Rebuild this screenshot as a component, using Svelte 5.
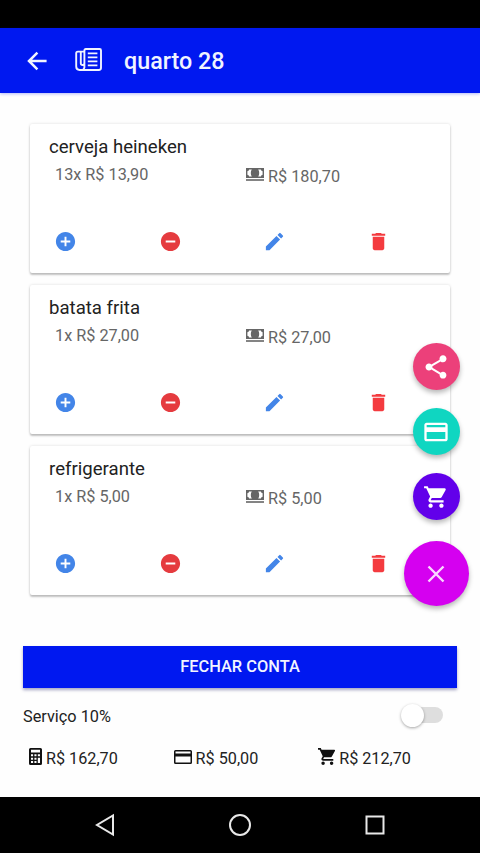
<script lang="ts">
	interface Item {
		name: string;
		qty: number;
		price: number;
	}

	let items = $state<Item[]>([
		{ name: 'cerveja heineken', qty: 13, price: 13.9 },
		{ name: 'batata frita', qty: 1, price: 27 },
		{ name: 'refrigerante', qty: 1, price: 5 }
	]);
	let service = $state(false);
	let fabOpen = $state(true);
	const paid = 50;

	const total = $derived(items.reduce((sum, i) => sum + i.qty * i.price, 0));
	const grandTotal = $derived(service ? total * 1.1 : total);

	function money(n: number) {
		return 'R$ ' + n.toFixed(2).replace('.', ',');
	}

	function removeItem(item: Item) {
		items = items.filter((i) => i !== item);
	}

	const icons = {
		add: 'M12 2C6.48 2 2 6.48 2 12s4.48 10 10 10 10-4.48 10-10S17.52 2 12 2zm5 11h-4v4h-2v-4H7v-2h4V7h2v4h4v2z',
		remove: 'M12 2C6.48 2 2 6.48 2 12s4.48 10 10 10 10-4.48 10-10S17.52 2 12 2zm5 11H7v-2h10v2z',
		edit: 'M3 17.25V21h3.75L17.81 9.94l-3.75-3.75L3 17.25zM20.71 7.04a1 1 0 0 0 0-1.41l-2.34-2.34a1 1 0 0 0-1.41 0l-1.83 1.83 3.75 3.75 1.83-1.83z',
		trash: 'M6 19c0 1.1.9 2 2 2h8c1.1 0 2-.9 2-2V7H6v12zM19 4h-3.5l-1-1h-5l-1 1H5v2h14V4z',
		share: 'M18 16.08c-.76 0-1.44.3-1.96.77L8.91 12.7c.05-.23.09-.46.09-.7s-.04-.47-.09-.7l7.05-4.11c.54.5 1.25.81 2.04.81 1.66 0 3-1.34 3-3s-1.34-3-3-3-3 1.34-3 3c0 .24.04.47.09.7L8.04 9.81C7.5 9.31 6.79 9 6 9c-1.66 0-3 1.34-3 3s1.34 3 3 3c.79 0 1.5-.31 2.04-.81l7.12 4.16c-.05.21-.08.43-.08.65 0 1.61 1.31 2.92 2.92 2.92s2.92-1.31 2.92-2.92-1.31-2.92-2.92-2.92z',
		card: 'M20 4H4c-1.11 0-1.99.89-1.99 2L2 18c0 1.11.89 2 2 2h16c1.11 0 2-.89 2-2V6c0-1.11-.89-2-2-2zm0 14H4v-6h16v6zm0-10H4V6h16v2z',
		cart: 'M7 18c-1.1 0-1.99.9-1.99 2S5.9 22 7 22s2-.9 2-2-.9-2-2-2zM1 2v2h2l3.6 7.59-1.35 2.45c-.16.28-.25.61-.25.96 0 1.1.9 2 2 2h12v-2H7.42c-.14 0-.25-.11-.25-.25l.03-.12.9-1.63h7.45c.75 0 1.41-.41 1.75-1.03l3.58-6.49A1 1 0 0 0 20 4H5.21l-.94-2H1zm16 16c-1.1 0-1.99.9-1.99 2s.89 2 1.99 2 2-.9 2-2-.9-2-2-2z'
	};
</script>

{#snippet icon(path: string, size: number)}
	<svg width={size} height={size} viewBox="0 0 24 24" fill="currentColor"><path d={path} /></svg>
{/snippet}

<div class="app">
	<div class="status-bar"></div>
	<header class="toolbar">
		<button class="back" aria-label="Voltar">
			<svg width="20" height="20" viewBox="0 0 20 20" fill="none" stroke="currentColor" stroke-width="2.5">
				<path d="M19.6 10H2.6M10.4 1.6L2 10l8.4 8.4" />
			</svg>
		</button>
		<svg class="paper" width="28" height="24" viewBox="0 0 28 24" fill="none" stroke="currentColor" stroke-width="1.9">
			<path d="M9.4 3.4V2.4Q9.4 1 10.8 1H24.6Q26 1 26 2.4V19.8Q26 22 23.8 22H4.6Q1.2 22 1.2 18.6V5.2Q1.2 3.6 2.8 3.6H9.4V15.6Q9.4 17 7.6 17Q5.8 17 5.8 15.2V3.8M9.4 15.6v3.8Q9.2 21 7.8 22" />
			<path d="M12.8 5.4h9.6M12.8 9.4h9.6M12.8 13.4h9.6M12.8 17.4h9.6" />
		</svg>
		<h1 class="title">quarto 28</h1>
	</header>

	<main class="list">
		{#each items as item}
			<section class="card">
				<h2 class="name">{item.name}</h2>
				<div class="values">
					<span class="unit">{item.qty}x {money(item.price)}</span>
					<span class="subtotal">
						<svg width="18" height="13" viewBox="0 0 18 13" fill="currentColor">
							<path fill-rule="evenodd" d="M0 0H18V10H0ZM1.4 3.2V6.8Q2.8 7 3.2 8.6H5.8Q4.8 7.2 4.8 5T5.8 1.4H3.2Q2.8 3 1.4 3.2ZM16.6 3.2Q15.2 3 14.8 1.4H12.2Q13.2 2.8 13.2 5T12.2 8.6H14.8Q15.2 7 16.6 6.8Z" />
							<path d="M0 11.2h18v1.6H0z" />
						</svg>
						{money(item.qty * item.price)}
					</span>
				</div>
				<div class="actions">
					<button class="blue" aria-label="Adicionar" onclick={() => item.qty++}>{@render icon(icons.add, 23)}</button>
					<button class="red" aria-label="Remover" onclick={() => (item.qty = Math.max(1, item.qty - 1))}>{@render icon(icons.remove, 23)}</button>
					<button class="blue" aria-label="Editar">{@render icon(icons.edit, 23)}</button>
					<button class="trash" aria-label="Excluir" onclick={() => removeItem(item)}>{@render icon(icons.trash, 23)}</button>
				</div>
			</section>
		{/each}
	</main>

	<footer class="summary">
		<button class="close-bill">FECHAR CONTA</button>
		<div class="service">
			<span>Serviço 10%</span>
			<button class="toggle" class:on={service} role="switch" aria-checked={service} aria-label="Serviço 10%" onclick={() => (service = !service)}>
				<span class="knob"></span>
			</button>
		</div>
		<div class="totals">
			<span class="total">
				<svg width="13" height="17" viewBox="0 0 13 17" fill="currentColor">
					<path fill-rule="evenodd" d="M1.5 0h10Q13 0 13 1.5v14Q13 17 11.5 17h-10Q0 17 0 15.5v-14Q0 0 1.5 0zM2 1.8v2.7h9V1.8zM2 6.2v2h2.1v-2zm3.4 0v2h2.1v-2zm3.4 0v2H11v-2zM2 9.7v2h2.1v-2zm3.4 0v2h2.1v-2zm3.4 0v5.4H11V9.7zM2 13.1v2h2.1v-2zm3.4 0v2h2.1v-2z" />
				</svg>
				{money(grandTotal - paid)}
			</span>
			<span class="total">
				<svg width="18" height="14" viewBox="0 0 18 14" fill="currentColor">
					<path fill-rule="evenodd" d="M1.5 0h15Q18 0 18 1.5v11Q18 14 16.5 14h-15Q0 14 0 12.5v-11Q0 0 1.5 0zm0 1.4v2h15v-2zm0 5v6.1h15v-6.1z" />
				</svg>
				{money(paid)}
			</span>
			<span class="total">
				<svg width="17" height="17" viewBox="1 2 20 20" fill="currentColor"><path d={icons.cart} /></svg>
				{money(grandTotal)}
			</span>
		</div>
	</footer>

	<nav class="system-nav">
		<svg width="20" height="24" viewBox="0 0 20 24"><path d="M18 2.5v19L2 12z" /></svg>
		<svg width="24" height="24" viewBox="0 0 24 24"><circle cx="12" cy="12" r="10" /></svg>
		<svg width="20" height="20" viewBox="0 0 20 20"><path d="M1.5 1.5h17v17h-17z" /></svg>
	</nav>

	<div class="fabs">
		{#if fabOpen}
			<button class="fab pink" aria-label="Compartilhar">{@render icon(icons.share, 28)}</button>
			<button class="fab teal" aria-label="Pagamento">{@render icon(icons.card, 28)}</button>
			<button class="fab purple" aria-label="Carrinho">{@render icon(icons.cart, 26)}</button>
		{/if}
		<button class="fab main" aria-label="Fechar menu" onclick={() => (fabOpen = !fabOpen)}>
			<svg width="18" height="18" viewBox="0 0 18 18" fill="none" stroke="currentColor" stroke-width="2.4">
				<path d="M1.5 1.5l15 15M16.5 1.5l-15 15" />
			</svg>
		</button>
	</div>
</div>

<style>
	:global(body) {
		margin: 0;
	}
	.app {
		position: relative;
		display: flex;
		flex-direction: column;
		height: 853px;
		background: #fefefe;
		color: #222;
		font-family: Roboto, sans-serif;
		overflow: hidden;
	}
	button {
		display: flex;
		align-items: center;
		justify-content: center;
		padding: 0;
		border: none;
		background: none;
		color: inherit;
		font-family: inherit;
		cursor: pointer;
	}
	svg {
		display: block;
		flex: none;
	}
	.status-bar {
		height: 28px;
		background: #000;
	}
	.toolbar {
		display: flex;
		align-items: center;
		height: 65px;
		padding-left: 27px;
		box-sizing: border-box;
		background: #0018f0;
		color: #f0f4ff;
		box-shadow: 0 1px 3px rgba(0, 24, 240, 0.3);
	}
	.back {
		margin-right: 28px;
	}
	.paper {
		margin: 0 21px 2px 0;
	}
	.title {
		margin: 0;
		font-size: 23.3px;
		font-weight: 500;
		line-height: 28px;
	}
	.list {
		display: flex;
		flex-direction: column;
		gap: 12px;
		height: 522px;
		padding: 31px 30px 0;
	}
	.card {
		height: 149px;
		box-sizing: border-box;
		padding: 11px 0 0 19px;
		border-radius: 2px;
		background: #fff;
		box-shadow:
			0 2px 2px rgba(0, 0, 0, 0.22),
			0 0 3px rgba(0, 0, 0, 0.14);
	}
	.name {
		margin: 0;
		font-size: 18.6px;
		font-weight: 400;
		line-height: 24px;
		color: #222;
	}
	.values {
		display: grid;
		grid-template-columns: 191px 1fr;
		padding-left: 6px;
		font-size: 16.25px;
		line-height: 20px;
		color: #666;
	}
	.unit {
		padding-top: 6px;
	}
	.subtotal {
		display: flex;
		gap: 4px;
		padding-top: 8px;
	}
	.subtotal svg {
		margin-top: 1px;
	}
	.actions {
		display: grid;
		grid-template-columns: 105px 104px 104px 104px;
		justify-items: start;
		padding: 43px 0 0 5px;
	}
	.blue {
		color: #4385e8;
	}
	.red {
		color: #e53b3f;
	}
	.trash {
		color: #f43b3f;
	}
	.summary {
		flex: 1;
		padding: 0 23px;
	}
	.close-bill {
		width: 434px;
		height: 42px;
		padding-bottom: 2px;
		background: #0018f0;
		color: #f2f4ff;
		font-size: 16.4px;
		font-weight: 500;
		box-shadow: 0 2px 3px rgba(0, 0, 90, 0.35);
	}
	.service {
		display: flex;
		align-items: center;
		justify-content: space-between;
		height: 54px;
		padding-right: 14px;
		font-size: 16.3px;
	}
	.service > span {
		padding-top: 3px;
	}
	.toggle {
		justify-content: flex-start;
		width: 36px;
		height: 16px;
		border-radius: 8px;
		background: #dedede;
	}
	.knob {
		flex: none;
		width: 23px;
		height: 23px;
		margin-left: -6px;
		border-radius: 50%;
		background: #fff;
		box-shadow: 0 1px 3px rgba(0, 0, 0, 0.35);
	}
	.toggle.on .knob {
		margin-left: 19px;
	}
	.totals {
		display: grid;
		grid-template-columns: repeat(3, 144.6px);
		padding: 1px 0 0 6px;
		font-size: 16.2px;
		line-height: 32px;
	}
	.total {
		display: flex;
		gap: 4px;
	}
	.total svg {
		margin-top: 5px;
		color: #111;
	}
	.total:nth-child(2) svg {
		margin-top: 7px;
	}
	.system-nav {
		display: grid;
		grid-template-columns: repeat(3, 135px);
		justify-content: center;
		place-items: center;
		height: 56px;
		background: #000;
	}
	.system-nav svg {
		fill: none;
		stroke: #e8e8e8;
		stroke-width: 2;
	}
	.fabs {
		position: absolute;
		right: 11px;
		top: 343px;
		display: flex;
		flex-direction: column;
		align-items: center;
		gap: 18px;
	}
	.fab {
		width: 47px;
		height: 47px;
		box-sizing: border-box;
		padding-right: 1px;
		border-radius: 50%;
		color: #fff;
		box-shadow: 0 3px 5px rgba(0, 0, 0, 0.28);
	}
	.pink {
		background: #ec407a;
	}
	.teal {
		background: #0fd6c1;
	}
	.purple {
		background: #6200ea;
	}
	.main {
		width: 65px;
		height: 65px;
		margin-top: 3px;
		background: #d500f0;
		color: #f9d8ff;
	}
</style>
